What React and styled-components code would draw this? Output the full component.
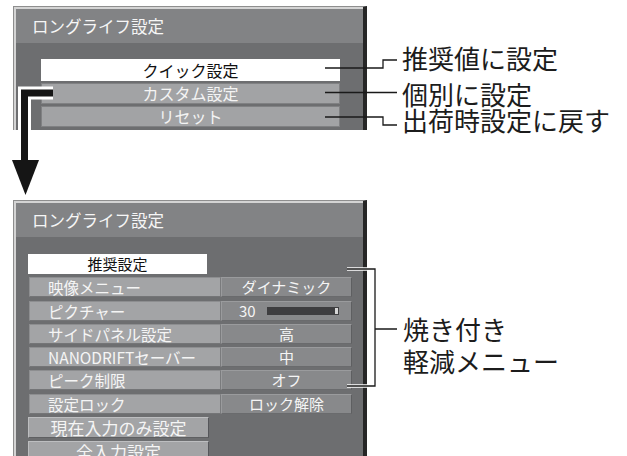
import React from 'react';
import styled, { createGlobalStyle } from 'styled-components';

const GlobalStyle = createGlobalStyle`
  html, body { margin: 0; padding: 0; background: #ffffff; }
  body {
    font-family: "Noto Sans CJK JP", "Noto Sans", sans-serif;
    width: 627px;
    height: 456px;
    overflow: hidden;
  }
  * { box-sizing: border-box; }
`;

const Figure = styled.div`
  position: relative;
  width: 627px;
  height: 456px;
  overflow: hidden;
  padding: 6px 0 0 13px;
  display: flex;
  flex-direction: column;
  gap: 67px;
`;

const Section = styled.div`
  display: flex;
  align-items: flex-start;
  flex-shrink: 0;
`;

const Panel = styled.div`
  width: 354px;
  height: ${(p) => p.$h}px;
  flex-shrink: 0;
  overflow: hidden;
  border-top: 1px solid #8e8e8e;
  border-left: 1px solid #8e8e8e;
  border-right: 4px solid #262626;
  background: #6d6e70;
`;

const Frame = styled.div`
  height: 100%;
  border-top: 2px solid #d4d4d4;
  border-left: 2px solid #d4d4d4;
  display: flex;
  flex-direction: column;
`;

const TitleBar = styled.div`
  height: 34px;
  flex-shrink: 0;
  background: #828385;
  color: #f6f6f6;
  font-size: 16.5px;
  line-height: 34px;
  padding-left: 16px;
`;

const Body = styled.div`
  display: flex;
  flex-direction: column;
  gap: ${(p) => p.$gap}px;
  padding: ${(p) => p.$pt}px 0 0 ${(p) => p.$pl}px;
`;

const Bar = styled.div`
  width: 299px;
  height: ${(p) => p.$h}px;
  flex-shrink: 0;
  text-align: center;
  font-size: 16px;
  line-height: ${(p) => p.$h - 2}px;
  background: ${(p) => (p.$active ? '#ffffff' : '#a2a3a5')};
  color: ${(p) => (p.$active ? '#111111' : '#f4f4f4')};
  border: 1px solid ${(p) => (p.$active ? '#ffffff' : '#808183')};
`;

const SelectedTab = styled.div`
  width: 179px;
  height: 20px;
  flex-shrink: 0;
  background: #ffffff;
  color: #111111;
  text-align: center;
  font-size: 15px;
  line-height: 20px;
`;

const Row = styled.div`
  display: grid;
  grid-template-columns: 192px 131px;
  height: 20px;
  flex-shrink: 0;
  margin-left: 1px;
`;

const LabelCell = styled.div`
  background: #a3a4a6;
  border: 1px solid;
  border-color: #8d8e90 #7a7b7d #747577 #8d8e90;
  color: #f5f5f5;
  font-size: 15.5px;
  line-height: 18px;
  padding-left: 18px;
  white-space: nowrap;
`;

const ValueCell = styled.div`
  background: #88898b;
  border: 1px solid;
  border-color: #9a9b9d #5e5f61 #6a6b6d #9a9b9d;
  color: #f5f5f5;
  font-size: 15px;
  line-height: 18px;
  display: flex;
  align-items: center;
  justify-content: ${(p) => (p.$left ? 'flex-start' : 'center')};
  padding-left: ${(p) => (p.$left ? 17 : 0)}px;
  white-space: nowrap;
`;

const Level = styled.div`
  width: 72px;
  height: 8px;
  margin-left: 11px;
  background: #3e3e40;
  display: flex;
  justify-content: flex-end;
  align-items: center;
  padding-right: 1px;
`;

const LevelTick = styled.div`
  width: 3px;
  height: 6px;
  background: #d6d6d6;
`;

const Button = styled.div`
  width: 181px;
  height: 21px;
  flex-shrink: 0;
  background: #a3a4a6;
  border: 1px solid;
  border-color: #bdbec0 #55565a #5f6062 #bdbec0;
  color: #f5f5f5;
  text-align: center;
  font-size: 17px;
  line-height: 19px;
`;

const Notes = styled.div`
  display: flex;
  flex-direction: column;
  margin-left: ${(p) => p.$ml}px;
  color: #1c1c1c;
  font-size: 26px;
  line-height: ${(p) => p.$lh}px;
  white-space: nowrap;
`;

const Note = styled.div`
  margin-top: ${(p) => p.$mt || 0}px;
`;

const Overlay = styled.svg`
  position: absolute;
  left: 0;
  top: 0;
  pointer-events: none;
`;

const rows = [
  { label: '映像メニュー', value: 'ダイナミック' },
  { label: 'ピクチャー', value: '30', level: true },
  { label: 'サイドパネル設定', value: '高' },
  { label: 'NANODRIFTセーバー', value: '中' },
  { label: 'ピーク制限', value: 'オフ' },
  { label: '設定ロック', value: 'ロック解除' },
];

export default function App() {
  return (
    <>
      <GlobalStyle />
      <Figure>
        <Section>
          <Panel $h={124}>
            <Frame>
              <TitleBar>ロングライフ設定</TitleBar>
              <Body $pt={16} $pl={25} $gap={2}>
                <Bar $h={22} $active>クイック設定</Bar>
                <Bar $h={21}>カスタム設定</Bar>
                <Bar $h={21}>リセット</Bar>
              </Body>
            </Frame>
          </Panel>
          <Notes $ml={35} $lh={26}>
            <Note $mt={38.5}>推奨値に設定</Note>
            <Note $mt={10}>個別に設定</Note>
            <Note $mt={0.5}>出荷時設定に戻す</Note>
          </Notes>
        </Section>

        <Section>
          <Panel $h={262}>
            <Frame>
              <TitleBar>ロングライフ設定</TitleBar>
              <Body $pt={17} $pl={12} $gap={3.25}>
                <SelectedTab>推奨設定</SelectedTab>
                {rows.map((r) => (
                  <Row key={r.label}>
                    <LabelCell>{r.label}</LabelCell>
                    <ValueCell $left={r.level}>
                      {r.value}
                      {r.level && (
                        <Level>
                          <LevelTick />
                        </Level>
                      )}
                    </ValueCell>
                  </Row>
                ))}
                <Button>現在入力のみ設定</Button>
                <Button>全入力設定</Button>
              </Body>
            </Frame>
          </Panel>
          <Notes $ml={36} $lh={32}>
            <Note $mt={113}>焼き付き</Note>
            <Note>軽減メニュー</Note>
          </Notes>
        </Section>

        <Overlay width="627" height="456" viewBox="0 0 627 456">
          {/* transition arrow */}
          <path d="M53 93 H24.5 V164" stroke="#ffffff" strokeWidth="13" fill="none" strokeLinejoin="miter" />
          <path d="M53 93 H24.5 V162" stroke="#151515" strokeWidth="7" fill="none" strokeLinejoin="miter" />
          <polygon points="12,160 39,160 25.5,195" fill="#151515" />

          {/* top callouts */}
          <g stroke="#1a1a1a" strokeWidth="1.3" fill="none">
            <path d="M325 68 H383 V60 H397" />
            <path d="M325 92.5 H397" />
            <path d="M325 117 H383 V125 H397" />
          </g>

          {/* bottom bracket */}
          <g fill="none">
            <path d="M347 269 H375 M347 386 H375" stroke="#ffffff" strokeWidth="3.5" />
            <path d="M347 269 H375 V386 H347 M375 329 H397" stroke="#1a1a1a" strokeWidth="1.3" />
          </g>
        </Overlay>
      </Figure>
    </>
  );
}
